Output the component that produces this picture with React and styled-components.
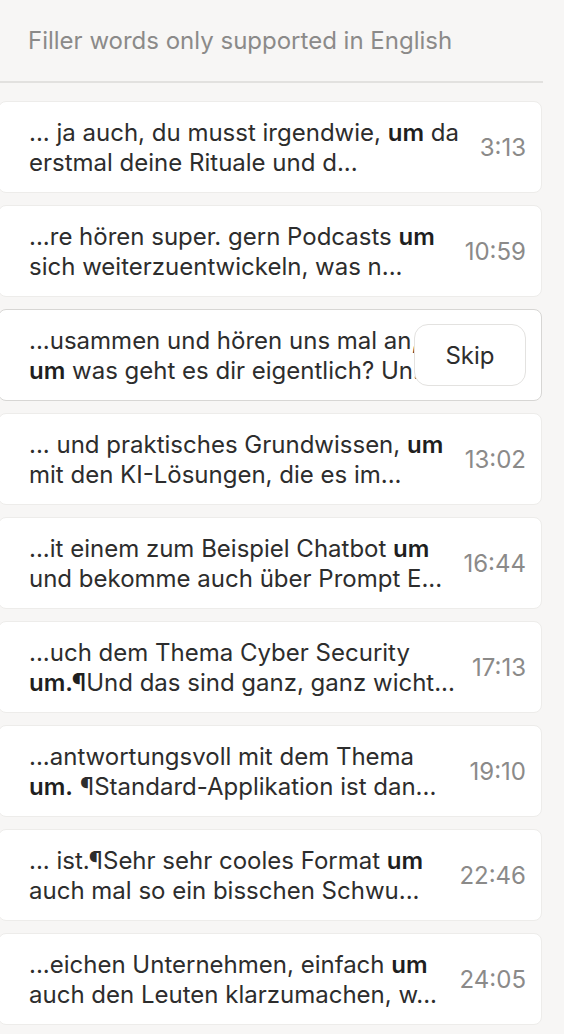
import styled, { createGlobalStyle } from 'styled-components'

const GlobalStyle = createGlobalStyle`
  html, body {
    margin: 0;
    padding: 0;
    background: #f7f6f5;
  }
  body {
    font-family: Inter, "Noto Sans", sans-serif;
    color: #2d2d2d;
    -webkit-font-smoothing: antialiased;
  }
`

const Panel = styled.div`
  width: 564px;
  height: 1034px;
  overflow: hidden;
`

const Notice = styled.div`
  width: 515px;
  height: 81px;
  padding-left: 28px;
  display: flex;
  align-items: center;
  font-size: 24px;
  color: #8b8a89;
  border-bottom: 2px solid #e2e1df;
  box-sizing: content-box;
`

const List = styled.div`
  display: flex;
  flex-direction: column;
  gap: 12px;
  padding-top: 18px;
  margin-left: -2px;
  width: 544px;
`

const Card = styled.div`
  position: relative;
  height: 92px;
  box-sizing: border-box;
  background: #fff;
  border: 1px solid ${p => (p.$active ? '#d7d6d4' : '#edecea')};
  border-radius: 8px;
  display: flex;
  align-items: center;
  padding: 1px 15px 0 30px;
`

const Snippet = styled.div`
  font-size: 24px;
  line-height: 30px;
  color: #2d2d2d;
  min-width: 0;
`

const Line = styled.div`
  white-space: nowrap;
  b {
    font-weight: 600;
    color: #1f1f1f;
  }
`

const Time = styled.span`
  font-size: 24px;
  color: #8b8a89;
  flex-shrink: 0;
  margin-left: auto;
  padding-left: 10px;
`

const SkipButton = styled.button`
  position: absolute;
  right: 15px;
  top: 50%;
  transform: translateY(-50%);
  width: 112px;
  height: 62px;
  border-radius: 14px;
  border: 1px solid #e3e2e0;
  background: #fff;
  font-family: inherit;
  font-size: 24px;
  color: #2d2d2d;
  cursor: pointer;
`

const rows = [
  { a: <>... ja auch, du musst irgendwie, <b>um</b> da</>, b: <>erstmal deine Rituale und d...</>, t: '3:13' },
  { a: <>...re hören super. gern Podcasts <b>um</b></>, b: <>sich weiterzuentwickeln, was n...</>, t: '10:59' },
  { a: <>...usammen und hören uns mal an, </>, b: <><b>um</b> was geht es dir eigentlich? Un...</>, t: '12:31', active: true },
  { a: <>... und praktisches Grundwissen, <b>um</b></>, b: <>mit den KI-Lösungen, die es im...</>, t: '13:02' },
  { a: <>...it einem zum Beispiel Chatbot <b>um</b></>, b: <>und bekomme auch über Prompt E...</>, t: '16:44' },
  { a: <>...uch dem Thema Cyber Security</>, b: <><b>um.¶</b>Und das sind ganz, ganz wicht...</>, t: '17:13' },
  { a: <>...antwortungsvoll mit dem Thema</>, b: <><b>um.</b> ¶Standard-Applikation ist dan...</>, t: '19:10' },
  { a: <>... ist.¶Sehr sehr cooles Format <b>um</b></>, b: <>auch mal so ein bisschen Schwu...</>, t: '22:46' },
  { a: <>...eichen Unternehmen, einfach <b>um</b></>, b: <>auch den Leuten klarzumachen, w...</>, t: '24:05' },
]

export default function App() {
  return (
    <Panel>
      <GlobalStyle />
      <Notice>Filler words only supported in English</Notice>
      <List>
        {rows.map((r, i) => (
          <Card key={i} $active={r.active}>
            <Snippet>
              <Line>{r.a}</Line>
              <Line>{r.b}</Line>
            </Snippet>
            {r.active ? <SkipButton>Skip</SkipButton> : <Time>{r.t}</Time>}
          </Card>
        ))}
      </List>
    </Panel>
  )
}
